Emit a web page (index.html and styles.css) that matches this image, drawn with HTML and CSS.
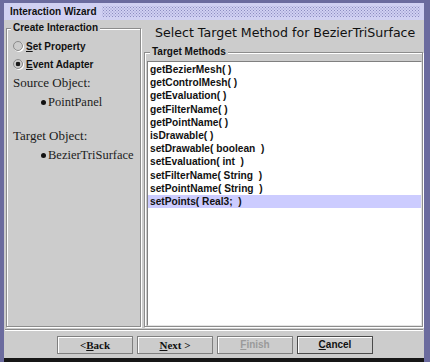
FILE: index.html
```html
<!DOCTYPE html>
<html>
<head>
<meta charset="utf-8">
<link rel="stylesheet" href="styles.css">
</head>
<body>
<div class="window">
  <div class="titlebar"><span class="title">Interaction Wizard</span><span class="bumps"></span></div>
  <div class="panes">
    <fieldset class="group left">
      <legend>Create Interaction</legend>
      <div class="group-body">
        <label class="radio"><input type="radio" name="mode"><span><u>S</u>et Property</span></label>
        <label class="radio"><input type="radio" name="mode" checked><span><u>E</u>vent Adapter</span></label>
        <div class="obj-label">Source Object:</div>
        <div class="obj"><span class="node"></span>PointPanel</div>
        <div class="obj-label target">Target Object:</div>
        <div class="obj"><span class="node"></span>BezierTriSurface</div>
      </div>
    </fieldset>
    <div class="right">
      <div class="heading">Select Target Method for BezierTriSurface</div>
      <fieldset class="group methods">
        <legend>Target Methods</legend>
        <ul class="list">
          <li>getBezierMesh( )</li>
          <li>getControlMesh( )</li>
          <li>getEvaluation( )</li>
          <li>getFilterName( )</li>
          <li>getPointName( )</li>
          <li>isDrawable( )</li>
          <li>setDrawable( boolean  )</li>
          <li>setEvaluation( int  )</li>
          <li>setFilterName( String  )</li>
          <li>setPointName( String  )</li>
          <li class="selected">setPoints( Real3;  )</li>
        </ul>
      </fieldset>
    </div>
  </div>
  <div class="separator"></div>
  <div class="buttons">
    <button class="btn serif">&lt; <u>B</u>ack</button>
    <button class="btn serif"><u>N</u>ext &gt;</button>
    <button class="btn disabled"><u>F</u>inish</button>
    <button class="btn default"><u>C</u>ancel</button>
  </div>
</div>
</body>
</html>
```
FILE: styles.css
```css
html, body {
  margin: 0;
  padding: 0;
}
body {
  width: 430px;
  height: 362px;
  overflow: hidden;
  background: #6b6b9e;
  font-family: "Liberation Sans", Arial, sans-serif;
  color: #111;
}
.window {
  margin: 3px 0 0 4px;
  width: 420px;
  height: 355px;
  background: #cccccc;
  display: flex;
  flex-direction: column;
  box-shadow: 0 4px 0 #161616;
}
.titlebar {
  height: 17px;
  flex: none;
  background: #d0d0f2;
  display: flex;
  align-items: center;
  padding: 0 4px 0 6px;
}
.title {
  font-weight: bold;
  font-size: 10px;
  line-height: 12px;
  color: #111;
}
.bumps {
  flex: 1;
  height: 11px;
  margin-left: 5px;
  background-image:
    radial-gradient(circle, #8c8cc0 28%, transparent 34%),
    radial-gradient(circle, #8c8cc0 28%, transparent 34%);
  background-size: 3px 3px;
  background-position: 0 0, 1.5px 1.5px;
}
.panes {
  flex: 1;
  min-height: 0;
  display: flex;
  gap: 3px;
  margin-top: 2px;
  padding: 0 1px 0 2px;
}
.group {
  margin: 0;
  padding: 0;
  min-width: 0;
  border: 1px solid #8c8c8c;
  box-shadow: inset 1px 1px 0 #fff, 1px 1px 0 #fff;
}
.group legend {
  font-weight: bold;
  font-size: 10px;
  line-height: 12px;
  padding: 0 2px;
  background: #cccccc;
  color: #111;
}
.left {
  width: 135px;
  box-sizing: border-box;
  flex: none;
}
.left legend {
  margin-left: 4px;
}
.group-body {
  padding: 3px 0 0 6px;
}
.radio {
  display: flex;
  align-items: center;
  height: 18px;
  font-weight: bold;
  font-size: 10px;
  color: #111;
}
.radio input {
  appearance: none;
  -webkit-appearance: none;
  box-sizing: border-box;
  width: 10px;
  height: 10px;
  margin: 0 3px 0 0;
  border-radius: 50%;
  border: 1px solid #8a8a8a;
  background: #cccccc;
  box-shadow: 1px 1px 0 #fff;
}
.radio input:checked {
  background: radial-gradient(circle, #1a1a1a 2px, #cccccc 2.6px);
}
.obj-label {
  font-family: "Liberation Serif", "Times New Roman", serif;
  font-size: 13px;
  line-height: 18px;
  color: #1a1a1a;
  margin-top: 1px;
}
.obj-label.target {
  margin-top: 16px;
}
.obj {
  display: flex;
  align-items: center;
  margin-top: 1px;
  padding-left: 28px;
  font-family: "Liberation Serif", "Times New Roman", serif;
  font-size: 12.5px;
  line-height: 18px;
  color: #222;
}
.node {
  width: 5px;
  height: 5px;
  border-radius: 50%;
  background: #111;
  margin-right: 2px;
}
.right {
  width: 279px;
  flex: none;
  display: flex;
  flex-direction: column;
}
.heading {
  font-family: "DejaVu Sans", "Liberation Sans", sans-serif;
  font-size: 12.6px;
  line-height: 16px;
  padding: 3px 0 0 11px;
  white-space: nowrap;
  color: #111;
}
.methods {
  flex: 1;
  min-height: 0;
  margin-top: 5px;
  display: flex;
  flex-direction: column;
  padding: 0 0 0 2px;
}
.methods legend {
  margin-left: 3px;
}
.list {
  flex: 1;
  list-style: none;
  margin: 3px 0 0;
  padding: 1px 0 0;
  background: #fff;
  border: 1px solid;
  border-color: #808080 #e4e4e4 #e4e4e4 #808080;
  font-weight: bold;
  font-size: 10.2px;
  color: #111;
}
.list li {
  line-height: 13.2px;
  height: 13.2px;
  padding-left: 2px;
  white-space: pre;
}
.list li.selected {
  background: #ccccff;
}
.separator {
  flex: none;
  margin: 2px 1px 0;
  border-top: 1px solid #8a8a8a;
  border-bottom: 1px solid #fff;
}
.buttons {
  flex: none;
  display: flex;
  gap: 4px;
  padding: 5px 0 4px 53px;
}
.btn {
  width: 76px;
  height: 18px;
  box-sizing: border-box;
  margin: 0;
  padding: 0;
  border: 1px solid #7f7f7f;
  box-shadow: inset 1px 1px 0 #fff;
  background: #cccccc;
  font-family: "Liberation Sans", Arial, sans-serif;
  font-weight: bold;
  font-size: 10px;
  line-height: 12px;
  color: #111;
  display: flex;
  align-items: center;
  justify-content: center;
}
.btn.serif {
  font-family: "Liberation Serif", "Times New Roman", serif;
  font-size: 11px;
}
.btn.disabled {
  color: #9a9a9a;
}
.btn.default {
  border-color: #4a4a4a;
}
```
